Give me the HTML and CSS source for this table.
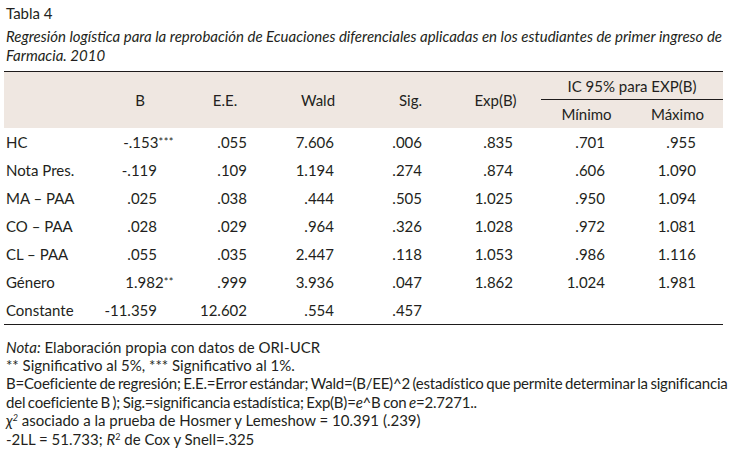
FILE: index.html
```html
<!DOCTYPE html>
<html lang="es">
<head>
<meta charset="utf-8">
<link rel="stylesheet" href="styles.css">
</head>
<body>
<div class="page">
  <p class="label">Tabla 4</p>
  <p class="caption">Regresión logística para la reprobación de Ecuaciones diferenciales aplicadas en los estudiantes de primer ingreso de Farmacia. 2010</p>
  <table class="data">
    <colgroup>
      <col class="c0"><col class="c1"><col class="c2"><col class="c3"><col class="c4"><col class="c5"><col class="c6"><col class="c7">
    </colgroup>
    <thead>
      <tr class="h1">
        <th rowspan="2"></th>
        <th rowspan="2">B</th>
        <th rowspan="2">E.E.</th>
        <th rowspan="2">Wald</th>
        <th rowspan="2">Sig.</th>
        <th rowspan="2">Exp(B)</th>
        <th colspan="2" class="ic">IC 95% para EXP(B)</th>
      </tr>
      <tr class="h2">
        <th>Mínimo</th>
        <th>Máximo</th>
      </tr>
    </thead>
    <tbody>
      <tr><td>HC</td><td>-.153<span class="sig">***</span></td><td>.055</td><td>7.606</td><td>.006</td><td>.835</td><td>.701</td><td>.955</td></tr>
      <tr><td>Nota Pres.</td><td>-.119</td><td>.109</td><td>1.194</td><td>.274</td><td>.874</td><td>.606</td><td>1.090</td></tr>
      <tr><td>MA – PAA</td><td>.025</td><td>.038</td><td>.444</td><td>.505</td><td>1.025</td><td>.950</td><td>1.094</td></tr>
      <tr><td>CO – PAA</td><td>.028</td><td>.029</td><td>.964</td><td>.326</td><td>1.028</td><td>.972</td><td>1.081</td></tr>
      <tr><td>CL – PAA</td><td>.055</td><td>.035</td><td>2.447</td><td>.118</td><td>1.053</td><td>.986</td><td>1.116</td></tr>
      <tr><td>Género</td><td>1.982<span class="sig">**</span></td><td>.999</td><td>3.936</td><td>.047</td><td>1.862</td><td>1.024</td><td>1.981</td></tr>
      <tr><td>Constante</td><td>-11.359</td><td>12.602</td><td>.554</td><td>.457</td><td></td><td></td><td></td></tr>
    </tbody>
  </table>
  <div class="notes">
    <p><em>Nota:</em> Elaboración propia con datos de ORI-UCR</p>
    <p>** Significativo al 5%, *** Significativo al 1%.</p>
    <p class="tight">B=Coeficiente de regresión; E.E.=Error estándar; Wald=(B/EE)^2 (estadístico que permite determinar la significancia del coeficiente B ); Sig.=significancia estadística; Exp(B)=<em>e</em>^B con <em>e</em>=2.7271..</p>
    <p><span class="chi">χ<sup>2</sup></span> asociado a la prueba de Hosmer y Lemeshow = 10.391 (.239)</p>
    <p>-2LL = 51.733; <em>R</em><sup>2</sup> de Cox y Snell=.325</p>
  </div>
</div>
</body>
</html>
```
FILE: styles.css
```css
html, body {
  margin: 0;
  padding: 0;
  background: #ffffff;
}
body {
  font-family: Lato, "Open Sans", sans-serif;
  color: #231f20;
  font-size: 15px;
}
.page {
  width: 731px;
  padding: 3px 0 0 0;
}
p {
  margin: 0;
}
.label {
  padding-left: 6px;
  line-height: 20px;
  margin-bottom: 4px;
}
.caption {
  font-style: italic;
  padding-left: 6px;
  padding-right: 6px;
  line-height: 19px;
}
.data {
  margin-top: 6px;
  margin-left: 4px;
  width: 719px;
  border-collapse: collapse;
  table-layout: fixed;
  border-top: 1px solid #1e1b1b;
  border-bottom: 1px solid #1e1b1b;
}
.c0 { width: 91px; }
.c1 { width: 90px; }
.c2 { width: 80px; }
.c3 { width: 106px; }
.c4 { width: 79px; }
.c5 { width: 91px; }
.c6 { width: 91px; }
.c7 { width: 91px; }
thead th {
  background: #efe7e1;
  font-weight: normal;
  text-align: center;
  padding: 0;
}
thead tr { height: 28px; }
.ic {
  border-bottom: 1px solid #1e1b1b;
}
tbody tr {
  height: 28px;
}
tbody td {
  padding: 0;
  text-align: right;
  white-space: nowrap;
  line-height: 28px;
}
tbody td:first-child {
  text-align: left;
  padding-left: 2px;
}
tbody td:nth-child(2) { padding-right: 28px; }
tbody td:nth-child(3) { padding-right: 18px; }
tbody td:nth-child(4) { padding-right: 37px; }
tbody td:nth-child(5) { padding-right: 28px; }
tbody td:nth-child(6) { padding-right: 28px; }
tbody td:nth-child(7) { padding-right: 27px; }
tbody td:nth-child(8) { padding-right: 27px; }
.sig {
  font-size: 11px;
  vertical-align: 2px;
  margin-right: -17px;
  letter-spacing: 0.5px;
}
.notes {
  padding: 13px 2px 0 6px;
  line-height: 18.4px;
}
.notes .tight {
  letter-spacing: -0.22px;
  word-spacing: -1px;
}
.notes sup {
  font-size: 9px;
  vertical-align: 5px;
  line-height: 0;
}
.chi {
  font-style: italic;
}
```
